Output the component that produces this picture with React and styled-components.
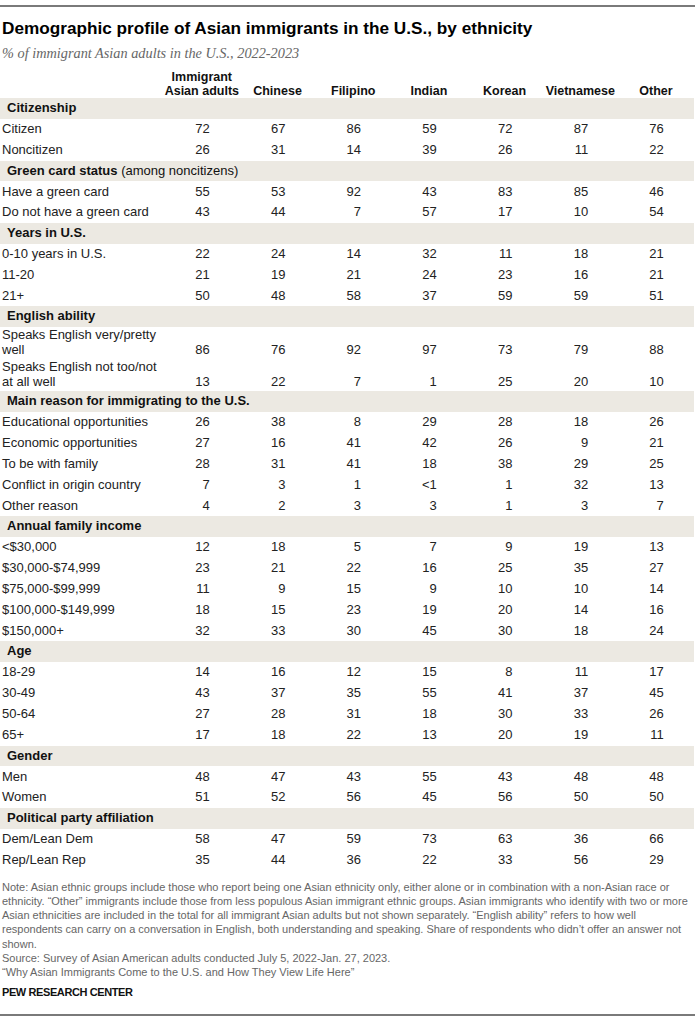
import React from "react";
import styled, { createGlobalStyle } from "styled-components";

const GlobalStyle = createGlobalStyle`
  body {
    margin: 0;
    background: #fff;
    font-family: "Liberation Sans", Arial, sans-serif;
    color: #222;
  }
`;

const Page = styled.div`
  width: 697px;
  box-sizing: border-box;
  padding: 5px 2px 0 0;
`;

const Rule = styled.div`
  height: 2px;
  background: #7a7a7a;
`;

const Title = styled.h1`
  margin: 10px 0 0 2px;
  font-family: "Liberation Sans", sans-serif;
  font-size: 17.2px;
  font-weight: bold;
  color: #000;
  line-height: 22px;
`;

const Subtitle = styled.div`
  margin: 5px 0 0 2px;
  font-family: "Liberation Serif", serif;
  font-style: italic;
  font-size: 14.3px;
  color: #666;
  line-height: 18px;
`;

const Table = styled.div`
  margin-top: 9px;
  display: grid;
  grid-template-columns: 164px repeat(7, 75.7px);
`;

const HeadCell = styled.div`
  display: flex;
  align-items: flex-end;
  justify-content: center;
  text-align: center;
  height: 27px;
  font-size: 12.5px;
  font-weight: bold;
  line-height: 14px;
  color: #111;
`;

const Band = styled.div`
  grid-column: 1 / -1;
  height: 20.85px;
  line-height: 20.85px;
  padding-left: 7px;
  background: #ece9e2;
  font-size: 13px;
  font-weight: bold;
  color: #111;
  white-space: nowrap;
`;

const Light = styled.span`
  font-weight: normal;
`;

const Cell = styled.div`
  display: flex;
  align-items: ${(p) => (p.$tall ? "flex-end" : "center")};
  justify-content: ${(p) => (p.$label ? "flex-start" : "flex-end")};
  height: ${(p) => (p.$tall ? "32px" : "20.85px")};
  box-sizing: border-box;
  padding: ${(p) =>
    p.$label ? (p.$tall ? "0 0 2px 2px" : "0 0 0 2px") : p.$tall ? "0 30px 2px 0" : "0 30px 0 0"};
  font-size: 13px;
  line-height: 14.5px;
  color: #222;
`;

const Notes = styled.div`
  margin-top: 9px;
  padding-left: 2px;
  font-family: "Liberation Sans", sans-serif;
  font-size: 11px;
  line-height: 14.2px;
  color: #666;
  white-space: nowrap;
`;

const Credit = styled.div`
  margin: 7px 0 16px 2px;
  font-family: "Liberation Sans", sans-serif;
  font-size: 11px;
  letter-spacing: -0.4px;
  font-weight: bold;
  color: #111;
`;

const columns = [
  ["Immigrant", "Asian adults"],
  ["Chinese"],
  ["Filipino"],
  ["Indian"],
  ["Korean"],
  ["Vietnamese"],
  ["Other"],
];

const sections = [
  {
    title: "Citizenship",
    rows: [
      ["Citizen", 72, 67, 86, 59, 72, 87, 76],
      ["Noncitizen", 26, 31, 14, 39, 26, 11, 22],
    ],
  },
  {
    title: "Green card status",
    note: "(among noncitizens)",
    rows: [
      ["Have a green card", 55, 53, 92, 43, 83, 85, 46],
      ["Do not have a green card", 43, 44, 7, 57, 17, 10, 54],
    ],
  },
  {
    title: "Years in U.S.",
    rows: [
      ["0-10 years in U.S.", 22, 24, 14, 32, 11, 18, 21],
      ["11-20", 21, 19, 21, 24, 23, 16, 21],
      ["21+", 50, 48, 58, 37, 59, 59, 51],
    ],
  },
  {
    title: "English ability",
    rows: [
      [["Speaks English very/pretty", "well"], 86, 76, 92, 97, 73, 79, 88],
      [["Speaks English not too/not", "at all well"], 13, 22, 7, 1, 25, 20, 10],
    ],
  },
  {
    title: "Main reason for immigrating to the U.S.",
    rows: [
      ["Educational opportunities", 26, 38, 8, 29, 28, 18, 26],
      ["Economic opportunities", 27, 16, 41, 42, 26, 9, 21],
      ["To be with family", 28, 31, 41, 18, 38, 29, 25],
      ["Conflict in origin country", 7, 3, 1, "<1", 1, 32, 13],
      ["Other reason", 4, 2, 3, 3, 1, 3, 7],
    ],
  },
  {
    title: "Annual family income",
    rows: [
      ["<$30,000", 12, 18, 5, 7, 9, 19, 13],
      ["$30,000-$74,999", 23, 21, 22, 16, 25, 35, 27],
      ["$75,000-$99,999", 11, 9, 15, 9, 10, 10, 14],
      ["$100,000-$149,999", 18, 15, 23, 19, 20, 14, 16],
      ["$150,000+", 32, 33, 30, 45, 30, 18, 24],
    ],
  },
  {
    title: "Age",
    rows: [
      ["18-29", 14, 16, 12, 15, 8, 11, 17],
      ["30-49", 43, 37, 35, 55, 41, 37, 45],
      ["50-64", 27, 28, 31, 18, 30, 33, 26],
      ["65+", 17, 18, 22, 13, 20, 19, 11],
    ],
  },
  {
    title: "Gender",
    rows: [
      ["Men", 48, 47, 43, 55, 43, 48, 48],
      ["Women", 51, 52, 56, 45, 56, 50, 50],
    ],
  },
  {
    title: "Political party affiliation",
    rows: [
      ["Dem/Lean Dem", 58, 47, 59, 73, 63, 36, 66],
      ["Rep/Lean Rep", 35, 44, 36, 22, 33, 56, 29],
    ],
  },
];

const noteLines = [
  "Note: Asian ethnic groups include those who report being one Asian ethnicity only, either alone or in combination with a non-Asian race or",
  "ethnicity. \u201cOther\u201d immigrants include those from less populous Asian immigrant ethnic groups. Asian immigrants who identify with two or more",
  "Asian ethnicities are included in the total for all immigrant Asian adults but not shown separately. \u201cEnglish ability\u201d refers to how well",
  "respondents can carry on a conversation in English, both understanding and speaking. Share of respondents who didn\u2019t offer an answer not",
  "shown.",
  "Source: Survey of Asian American adults conducted July 5, 2022-Jan. 27, 2023.",
  "\u201cWhy Asian Immigrants Come to the U.S. and How They View Life Here\u201d",
];

const App = () => {
  return (
    <Page>
      <GlobalStyle />
      <Rule />
      <Title>Demographic profile of Asian immigrants in the U.S., by ethnicity</Title>
      <Subtitle>% of immigrant Asian adults in the U.S., 2022-2023</Subtitle>

      <Table>
        <HeadCell />
        {columns.map((c) => (
          <HeadCell key={c.join(" ")}>
            <div>
              {c.map((line, i) => (
                <div key={i}>{line}</div>
              ))}
            </div>
          </HeadCell>
        ))}

        {sections.map((s) => (
          <React.Fragment key={s.title}>
            <Band>
              {s.title}
              {s.note && <Light> {s.note}</Light>}
            </Band>
            {s.rows.map((r) => {
              const [label, ...vals] = r;
              const tall = Array.isArray(label);
              const key = tall ? label.join(" ") : label;
              return (
                <React.Fragment key={key}>
                  <Cell $label $tall={tall}>
                    {tall ? (
                      <div>
                        {label[0]}
                        <br />
                        {label[1]}
                      </div>
                    ) : (
                      label
                    )}
                  </Cell>
                  {vals.map((v, i) => (
                    <Cell key={i} $tall={tall}>
                      {v}
                    </Cell>
                  ))}
                </React.Fragment>
              );
            })}
          </React.Fragment>
        ))}
      </Table>

      <Notes>
        {noteLines.map((l, i) => (
          <div key={i}>{l}</div>
        ))}
      </Notes>
      <Credit>PEW RESEARCH CENTER</Credit>
      <Rule />
    </Page>
  );
};

export default App;
